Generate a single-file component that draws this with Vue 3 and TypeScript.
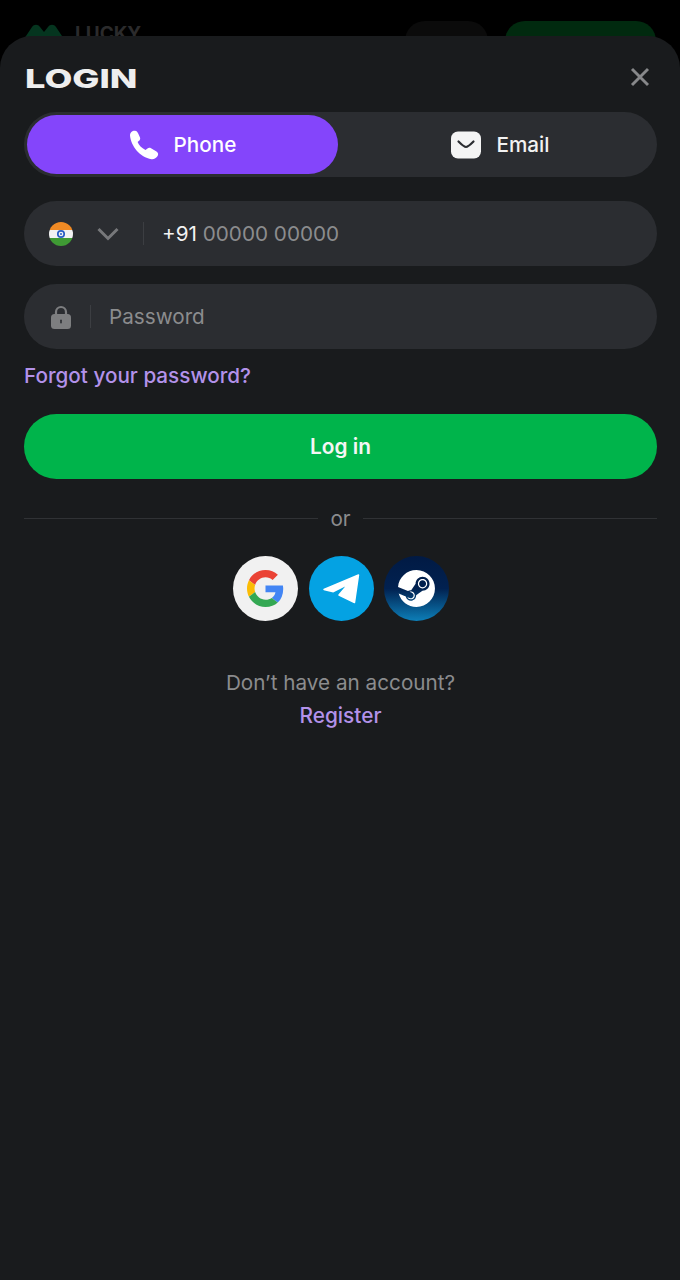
<script setup lang="ts">
import { ref } from 'vue'

const tab = ref<'phone' | 'email'>('phone')
</script>

<template>
  <div class="page">
    <header class="topbar">
      <div class="brand">
        <svg class="brand-mark" viewBox="0 0 40 24" aria-hidden="true">
          <path d="M0 15 8 3c2-3 6-3 8 0l4 5 4-5c2-3 6-3 8 0l8 12-6 9H6z" fill="#05351f" />
        </svg>
        <span class="brand-name">LUCKY</span>
      </div>
      <div class="topbar-actions">
        <span class="ghost-btn" />
        <span class="green-btn" />
      </div>
    </header>

    <section class="sheet">
      <div class="sheet-head">
        <h1 class="title">LOGIN</h1>
        <button type="button" class="close" aria-label="Close">
          <svg viewBox="0 0 20 20" width="20" height="20" aria-hidden="true">
            <path d="M2 2l16 16M18 2 2 18" stroke="#87888a" stroke-width="2.9" fill="none" />
          </svg>
        </button>
      </div>

      <div class="tabs" role="tablist">
        <button type="button" class="tab" :class="{ active: tab === 'phone' }" @click="tab = 'phone'">
          <svg class="tab-icon" viewBox="0 0 30 30" width="30" height="30" aria-hidden="true">
            <path
              d="M1 5.500C1 2.500 3.500.5 6 .8c1.500.2 2.500 1.200 3.200 2.700L11 7.500c.5 1.300 0 2.500-1 3.300L8.600 12c1.200 3 3.900 6 7.900 8l2-1.500c1.100-.8 2.300-.8 3.500-.2l5.500 3.200c1.700 1 2.100 3 1.100 4.500-1.300 2-3.600 3.500-6.100 3.200C11 27.500 2 16 1 5.500z"
              fill="#fff"
            />
          </svg>
          <span>Phone</span>
        </button>
        <button type="button" class="tab tab-email" :class="{ active: tab === 'email' }" @click="tab = 'email'">
          <svg class="tab-icon" viewBox="0 0 30 28" width="30" height="28" aria-hidden="true">
            <rect y="0.500" width="30" height="27" rx="7" fill="#f4f4f4" />
            <path d="M7.500 10.500C11 14 13 16 15 16s4-2 7.500-5.500" stroke="#2b2d31" stroke-width="2.200" stroke-linecap="round" fill="none" />
          </svg>
          <span>Email</span>
        </button>
      </div>

      <div class="field phone-field">
        <svg class="flag" viewBox="0 0 24 24" width="24" height="24" aria-hidden="true">
          <defs>
            <clipPath id="flag-clip"><circle cx="12" cy="12" r="12" /></clipPath>
          </defs>
          <g clip-path="url(#flag-clip)">
            <rect width="24" height="8" fill="#f08a24" />
            <rect y="8" width="24" height="8" fill="#f2f2f2" />
            <rect y="16" width="24" height="8" fill="#3f9a34" />
            <circle cx="12" cy="12" r="3.200" fill="none" stroke="#2a5fc4" stroke-width="1.700" />
            <circle cx="12" cy="12" r="1" fill="#2a5fc4" />
          </g>
        </svg>
        <svg class="chevron" viewBox="0 0 22 14" width="22" height="14" aria-hidden="true">
          <path d="M1.500 2 11 11.500 20.500 2" stroke="#77787b" stroke-width="3" fill="none" />
        </svg>
        <span class="sep sep-phone" />
        <span class="value"><span class="code">+91</span> <span class="hint">00000 00000</span></span>
      </div>

      <div class="field password-field">
        <svg class="lock" viewBox="0 0 20 24" width="20" height="24" aria-hidden="true">
          <path d="M5 10V7a5 5 0 0 1 10 0v3" stroke="#7d7e80" stroke-width="2.200" fill="none" />
          <rect y="9" width="20" height="15" rx="3.500" fill="#7d7e80" />
          <rect x="9.200" y="14.500" width="1.600" height="4" rx="0.800" fill="#2b2d31" />
        </svg>
        <span class="sep sep-pass" />
        <span class="hint">Password</span>
      </div>

      <a class="link forgot">Forgot your password?</a>

      <button type="button" class="submit">Log in</button>

      <div class="divider">
        <span class="line" />
        <span class="or">or</span>
        <span class="line" />
      </div>

      <div class="socials">
        <a class="social google" aria-label="Google">
          <svg viewBox="0 0 48 48" width="37" height="37" aria-hidden="true">
            <path fill="#ea4335" d="M24 9.500c3.540 0 6.710 1.220 9.210 3.600l6.850-6.850C35.900 2.380 30.470 0 24 0 14.620 0 6.510 5.380 2.560 13.220l7.980 6.190C12.430 13.720 17.740 9.500 24 9.500z" />
            <path fill="#4285f4" d="M46.980 24.550c0-1.570-.15-3.090-.38-4.550H24v9.020h12.940c-.58 2.960-2.260 5.480-4.780 7.180l7.730 6c4.510-4.180 7.090-10.360 7.090-17.650z" />
            <path fill="#fbbc05" d="M10.530 28.590c-.48-1.450-.76-2.990-.76-4.590s.27-3.140.76-4.590l-7.980-6.190C.92 16.460 0 20.120 0 24c0 3.880.92 7.540 2.560 10.780l7.970-6.190z" />
            <path fill="#34a853" d="M24 48c6.480 0 11.930-2.130 15.890-5.810l-7.730-6c-2.150 1.450-4.920 2.300-8.160 2.300-6.260 0-11.570-4.220-13.470-9.910l-7.980 6.190C6.510 42.620 14.620 48 24 48z" />
          </svg>
        </a>
        <a class="social telegram" aria-label="Telegram">
          <svg viewBox="0 0 65 65" width="65" height="65" aria-hidden="true">
            <path
              d="M15 33.500 49.500 19 45.500 46.500 30 39 39.300 28 24.300 35.700z"
              fill="#fff"
              stroke="#fff"
              stroke-width="1.500"
              stroke-linejoin="round"
            />
          </svg>
        </a>
        <a class="social steam" aria-label="Steam">
          <svg viewBox="0 0 24 24" width="37" height="37" aria-hidden="true">
            <path
              fill="#fff"
              d="M11.979 0C5.678 0 .511 4.860.022 11.037l6.432 2.658c.545-.371 1.203-.59 1.912-.59.063 0 .125.004.188.006l2.861-4.142V8.910c0-2.495 2.028-4.524 4.524-4.524 2.494 0 4.524 2.031 4.524 4.527s-2.030 4.525-4.524 4.525h-.105l-4.076 2.911c0 .052.004.105.004.159 0 1.875-1.515 3.396-3.390 3.396-1.635 0-3.016-1.173-3.331-2.727L.436 15.270C1.862 20.307 6.486 24 11.979 24c6.627 0 11.999-5.373 11.999-12S18.605 0 11.979 0zM7.540 18.210l-1.473-.61c.262.543.714.999 1.314 1.250 1.297.539 2.793-.076 3.332-1.375.263-.63.264-1.319.005-1.949s-.75-1.121-1.377-1.383c-.624-.26-1.290-.249-1.878-.03l1.523.63c.956.4 1.409 1.500 1.009 2.455-.397.957-1.497 1.410-2.454 1.012H7.540zm11.415-9.303c0-1.662-1.353-3.015-3.015-3.015-1.665 0-3.015 1.353-3.015 3.015 0 1.665 1.350 3.015 3.015 3.015 1.663 0 3.015-1.350 3.015-3.015zm-5.273-.005c0-1.252 1.013-2.266 2.265-2.266 1.249 0 2.266 1.014 2.266 2.266 0 1.251-1.017 2.265-2.266 2.265-1.253 0-2.265-1.014-2.265-2.265z"
            />
          </svg>
        </a>
      </div>

      <p class="no-account">Don’t have an account?</p>
      <a class="link register">Register</a>
    </section>
  </div>
</template>

<style scoped>
.page {
  position: relative;
  height: 1280px;
  overflow: hidden;
  background: #000;
  font-family: Inter, 'Liberation Sans', sans-serif;
}

.topbar {
  display: flex;
  align-items: flex-start;
  justify-content: space-between;
  padding: 21px 24px 0;
}

.brand {
  display: flex;
  align-items: flex-start;
  gap: 11px;
  margin-top: 3px;
}

.brand-mark {
  width: 40px;
  height: 24px;
}

.brand-name {
  font-size: 19px;
  font-weight: 700;
  line-height: 20px;
  color: #2b2b2c;
}

.topbar-actions {
  display: flex;
  gap: 17px;
}

.ghost-btn {
  width: 83px;
  height: 40px;
  border-radius: 20px;
  background: #0b0b0b;
}

.green-btn {
  width: 151px;
  height: 40px;
  border-radius: 20px;
  background: #012a0f;
}

/* the login sheet sits over the dimmed page */
.sheet {
  position: absolute;
  inset: 36px 0 0;
  display: flex;
  flex-direction: column;
  padding: 0 23px 0 24px;
  background: #191b1d;
  border-radius: 32px 32px 0 0;
}

.sheet-head {
  display: flex;
  align-items: center;
  justify-content: space-between;
  box-sizing: border-box;
  height: 76px;
  padding: 6px 7px 0 0;
}

.title {
  margin: 3px 0 0 1px;
  font-size: 26px;
  font-weight: 800;
  line-height: 1;
  color: #eeeeee;
  transform: scaleX(1.39);
  transform-origin: left center;
}

.close {
  display: flex;
  padding: 0;
  border: none;
  background: none;
}

.tabs {
  display: grid;
  grid-template-columns: 311px 1fr;
  box-sizing: border-box;
  height: 65px;
  padding: 3px 0 3px 3px;
  background: #2b2d31;
  border-radius: 33px;
}

.tab {
  display: flex;
  align-items: center;
  justify-content: center;
  gap: 15px;
  padding: 0;
  border: none;
  border-radius: 30px;
  background: none;
  color: #f2f2f2;
  font: inherit;
  font-size: 20.700px;
  font-weight: 500;
}

.tab-email {
  padding-left: 6px;
}

.tab.active {
  background: #8445fb;
  color: #fff;
}

.field {
  display: flex;
  align-items: center;
  box-sizing: border-box;
  height: 65px;
  margin-top: 24px;
  border-radius: 33px;
  background: #2b2d31;
  font-size: 20.700px;
}

.phone-field {
  padding-left: 25px;
}

.password-field {
  margin-top: 18px;
  padding-left: 27px;
}

.chevron {
  margin-left: 24px;
}

.sep {
  width: 1px;
  height: 23px;
  background: #3c3e42;
}

.sep-phone {
  margin: 0 18px 0 24px;
}

.sep-pass {
  margin: 0 18px 0 19px;
}

.code {
  color: #f2f2f2;
}

.hint {
  color: #8b8c8e;
}

.link {
  color: #b392ea;
  font-weight: 500;
}

.forgot {
  margin-top: 14px;
  font-size: 20.700px;
  line-height: 26px;
}

.submit {
  height: 65px;
  margin-top: 25px;
  border: none;
  border-radius: 33px;
  background: #00b44b;
  color: #f4f6f4;
  font: inherit;
  font-size: 20.800px;
  font-weight: 600;
}

.divider {
  display: flex;
  align-items: center;
  gap: 12px;
  height: 26px;
  margin-top: 26px;
}

.line {
  flex: 1;
  height: 1px;
  background: #303235;
}

.or {
  color: #8b8c8e;
  font-size: 20.700px;
}

.socials {
  display: flex;
  justify-content: center;
  gap: 10.500px;
  margin-top: 25px;
  padding-left: 1px;
}

.social {
  display: flex;
  align-items: center;
  justify-content: center;
  width: 65px;
  height: 65px;
  border-radius: 50%;
}

.google {
  background: #f1f1f1;
}

.telegram {
  background: #04a2e3;
}

.steam {
  background: linear-gradient(180deg, #011a44 0%, #012150 50%, #0d7fb8 100%);
}

.no-account {
  margin: 49px 0 0;
  color: #8b8c8e;
  font-size: 20.700px;
  line-height: 26px;
  text-align: center;
}

.register {
  margin-top: 7px;
  font-size: 20.800px;
  line-height: 26px;
  text-align: center;
}
</style>
